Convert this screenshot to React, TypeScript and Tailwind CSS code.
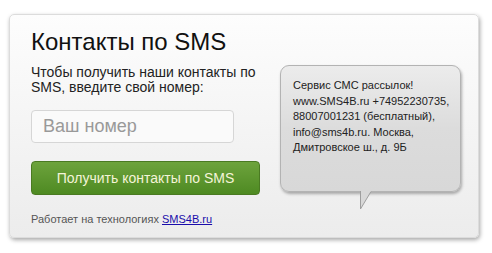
import React from 'react';

export default function App() {
  return (
    <div className="w-[492px] h-[253px] bg-white pt-[14px] pl-[9px] font-['Liberation_Sans',Arial,sans-serif]">
      {/* панель виджета */}
      <div className="relative w-[470px] h-[224px] rounded-[5px] border border-[#dcdcdc] bg-gradient-to-b from-[#fdfdfd] to-[#ececec] shadow-[1px_2px_4px_rgba(0,0,0,0.35)] pl-[21px] pt-[13px]">
        <h1 className="text-[24px] leading-[28px] text-[#111]">Контакты по SMS</h1>

        <div className="flex mt-[9px]">
          {/* форма */}
          <div className="w-[230px]">
            <p className="text-[14px] leading-[15px] text-[#222]">
              Чтобы получить наши контакты по SMS, введите свой номер:
            </p>
            <input
              type="text"
              placeholder="Ваш номер"
              className="mt-[15px] block w-[203px] h-[33px] rounded-[4px] border border-[#d6d6d6] bg-[#fafafa] px-[11px] text-[18px] text-[#333] placeholder:text-[#999] outline-none"
            />
            <button className="mt-[18px] block w-[229px] h-[34px] rounded-[4px] border border-[#4a7a22] bg-gradient-to-b from-[#6da33c] to-[#4e8a22] text-[14px] text-[#f4f4d8]">
              Получить контакты по SMS
            </button>
            <p className="mt-[16px] text-[11px] text-[#555]">
              Работает на технологиях{' '}
              <a href="#" className="text-[#1a0dab] underline">SMS4B.ru</a>
            </p>
          </div>

          {/* облачко с контактами */}
          <div className="relative ml-[19px] w-[181px] h-[127px]">
            <div className="h-full rounded-[9px] border border-[#b3b3b3] bg-gradient-to-b from-[#ececec] via-[#dcdcdc] to-[#d8d8d8] shadow-[1px_2px_3px_rgba(0,0,0,0.3)] pl-[12px] pr-[4px] pt-[12px] text-[11px] leading-[15.5px] text-[#222]">
              Сервис СМС рассылок!<br />
              www.SMS4B.ru +74952230735, 88007001231 (бесплатный), info@sms4b.ru. Москва, Дмитровское ш., д. 9Б
            </div>
            <svg className="absolute left-[80px] top-[125px]" width="13" height="20" viewBox="0 0 13 20">
              <path d="M0.5 0 L0.5 19 L11 1.5 L11 0 Z" fill="#d8d8d8" />
              <path d="M0.5 1 L0.5 19 L11 1.5" fill="none" stroke="#9e9e9e" strokeWidth="1" />
            </svg>
          </div>
        </div>
      </div>
    </div>
  );
}
